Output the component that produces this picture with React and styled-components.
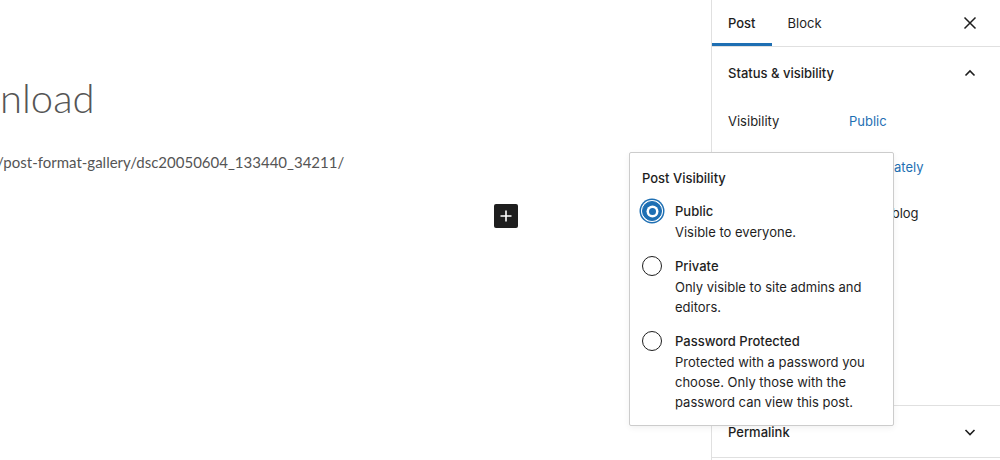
import React from 'react';
import styled, { createGlobalStyle } from 'styled-components';

const GlobalStyle = createGlobalStyle`
  html, body {
    margin: 0;
    padding: 0;
    background: #fff;
  }
  * { box-sizing: border-box; }
`;

const options = [
  { id: 'public', label: 'Public', help: 'Visible to everyone.', checked: true },
  { id: 'private', label: 'Private', help: 'Only visible to site admins and editors.' },
  {
    id: 'password',
    label: 'Password Protected',
    help: 'Protected with a password you choose. Only those with the password can view this post.',
  },
];

const CloseIcon = () => (
  <svg width="24" height="24" viewBox="0 0 24 24">
    <path d="M6.5 6.5l11 11M17.5 6.5l-11 11" stroke="#1e1e1e" strokeWidth="1.5" fill="none" />
  </svg>
);

const Chevron = ({ up }) => (
  <svg width="24" height="24" viewBox="0 0 24 24">
    <path
      d={up ? 'M7.5 14.5l4.5-4.5 4.5 4.5' : 'M7.5 10l4.5 4.5 4.5-4.5'}
      stroke="#1e1e1e"
      strokeWidth="1.6"
      fill="none"
    />
  </svg>
);

const App = () => (
  <Page>
    <GlobalStyle />
    <Editor>
      <Title>nload</Title>
      <Url>/post-format-gallery/dsc20050604_133440_34211/</Url>
      <AppenderRow>
        <Appender>
          <svg width="24" height="24" viewBox="0 0 24 24">
            <path d="M12 6.5v11M6.5 12h11" stroke="#fff" strokeWidth="1.6" />
          </svg>
        </Appender>
      </AppenderRow>
    </Editor>
    <Sidebar>
      <Tabs>
        <Tab active>Post</Tab>
        <Tab>Block</Tab>
        <IconButton>
          <CloseIcon />
        </IconButton>
      </Tabs>
      <Panel>
        <PanelHeader>
          Status &amp; visibility
          <Chevron up />
        </PanelHeader>
        <PanelRow>
          <RowLabel>Visibility</RowLabel>
          <LinkText>Public</LinkText>
        </PanelRow>
        <PanelRow>
          <RowLabel>Publish</RowLabel>
          <LinkText>Immediately</LinkText>
        </PanelRow>
        <CheckRow>
          <Check />
          Stick to the top of the blog
        </CheckRow>
      </Panel>
      <Panel closed>
        <PanelHeader>
          Permalink
          <Chevron />
        </PanelHeader>
      </Panel>

      <Popover>
        <PopoverTitle>Post Visibility</PopoverTitle>
        {options.map((o) => (
          <Option key={o.id}>
            <Radio checked={o.checked} />
            <OptionText>
              <OptionLabel>{o.label}</OptionLabel>
              <OptionHelp>{o.help}</OptionHelp>
            </OptionText>
          </Option>
        ))}
      </Popover>
    </Sidebar>
  </Page>
);

const Page = styled.div`
  display: flex;
  width: 1000px;
  height: 460px;
  overflow: hidden;
  font-family: Inter, 'Liberation Sans', sans-serif;
  color: #1e1e1e;
`;

const Editor = styled.div`
  flex: 1;
  min-width: 0;
  overflow: hidden;
  padding-top: 72px;
  font-family: Lato, 'Open Sans', sans-serif;
  color: #555;
`;

const Title = styled.div`
  font-size: 40px;
  font-weight: 300;
  line-height: 52px;
  color: #555;
`;

const Url = styled.div`
  margin-top: 26px;
  margin-left: -3px;
  font-size: 15px;
  line-height: 24px;
  color: #555;
`;

const AppenderRow = styled.div`
  display: flex;
  padding-left: 494px;
  margin-top: 30px;
`;

const Appender = styled.div`
  display: flex;
  align-items: center;
  justify-content: center;
  width: 24px;
  height: 24px;
  background: #1e1e1e;
  border-radius: 2px;
`;

const Sidebar = styled.div`
  position: relative;
  width: 289px;
  flex-shrink: 0;
  border-left: 1px solid #e0e0e0;
  font-size: 13px;
`;

const Tabs = styled.div`
  display: flex;
  align-items: stretch;
  height: 47px;
  border-bottom: 1px solid #e0e0e0;
`;

const Tab = styled.div`
  display: flex;
  align-items: center;
  padding: 0 16px;
  font-weight: ${(p) => (p.active ? 500 : 400)};
  box-shadow: ${(p) => (p.active ? 'inset 0 -3px 0 #1e6fb3' : 'none')};
`;

const IconButton = styled.div`
  display: flex;
  align-items: center;
  justify-content: center;
  margin-left: auto;
  width: 36px;
  margin-right: 12px;
`;

const Panel = styled.div`
  border-bottom: 1px solid #e0e0e0;
  padding-bottom: ${(p) => (p.closed ? 0 : '169px')};
`;

const PanelHeader = styled.div`
  display: flex;
  align-items: center;
  justify-content: space-between;
  height: 51px;
  padding: 0 18px 0 16px;
  font-weight: 500;
`;

const PanelRow = styled.div`
  display: flex;
  align-items: center;
  height: 46px;
  padding: 0 16px;
`;

const RowLabel = styled.div`
  width: 121px;
`;

const LinkText = styled.div`
  color: #1e6fb3;
`;

const CheckRow = styled.div`
  display: flex;
  align-items: center;
  gap: 12px;
  height: 46px;
  padding: 0 16px;
`;

const Check = styled.span`
  width: 16px;
  height: 16px;
  border: 1px solid #1e1e1e;
  border-radius: 2px;
`;

const Popover = styled.div`
  position: absolute;
  top: 152px;
  left: -83px;
  width: 265px;
  padding: 16px 12px 13px 12px;
  background: #fff;
  border: 1px solid #ccc;
  border-radius: 2px;
  box-shadow: 0 2px 6px rgba(0, 0, 0, 0.06);
`;

const PopoverTitle = styled.div`
  font-weight: 500;
  line-height: 18px;
  margin-bottom: 14px;
`;

const Option = styled.div`
  display: flex;
  gap: 13px;
  & + & {
    margin-top: 14px;
  }
`;

const Radio = styled.span`
  flex-shrink: 0;
  position: relative;
  width: 20px;
  height: 20px;
  border-radius: 50%;
  border: 1px solid #1e1e1e;
  ${(p) =>
    p.checked &&
    `
    background: #1e6fb3;
    border-color: #1e6fb3;
    box-shadow: 0 0 0 1px #fff, 0 0 0 2.5px #1e6fb3;
    &::after {
      content: '';
      position: absolute;
      inset: 0;
      margin: auto;
      width: 7px;
      height: 7px;
      border-radius: 50%;
      background: #1e6fb3;
      box-shadow: 0 0 0 2.5px #fff;
    }
  `}
`;

const OptionText = styled.div`
  display: flex;
  flex-direction: column;
  line-height: 20px;
`;

const OptionLabel = styled.div`
  font-weight: 500;
`;

const OptionHelp = styled.div`
  margin-top: 1px;
`;

export default App;
